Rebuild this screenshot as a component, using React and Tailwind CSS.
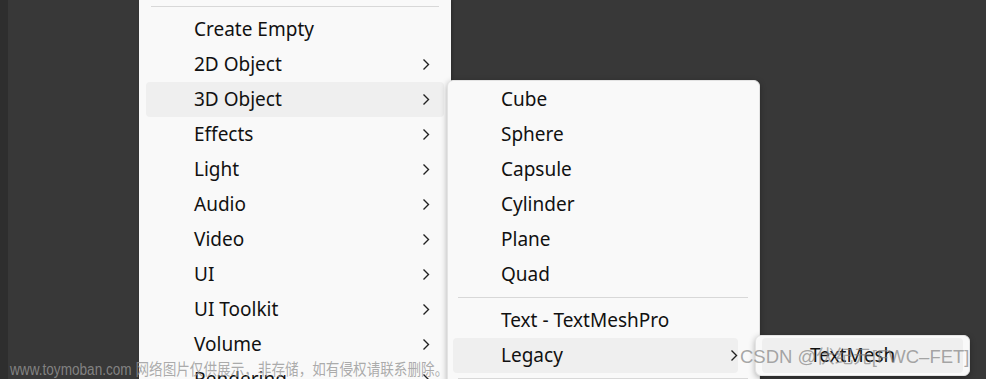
import React from "react";

const mainItems = [
  { label: "Create Empty" },
  { label: "2D Object", sub: true },
  { label: "3D Object", sub: true, active: true },
  { label: "Effects", sub: true },
  { label: "Light", sub: true },
  { label: "Audio", sub: true },
  { label: "Video", sub: true },
  { label: "UI", sub: true },
  { label: "UI Toolkit", sub: true },
  { label: "Volume", sub: true },
  { label: "Rendering", sub: true },
];

const Chevron = () => (
  <svg width="8" height="13" viewBox="0 0 8 13" fill="none" className="shrink-0">
    <path d="M1.5 1.5 L6.5 6.5 L1.5 11.5" stroke="#222" strokeWidth="1.4" />
  </svg>
);

const Row = ({ label, sub, active, className = "" }) => (
  <div
    className={`h-[35px] flex items-center rounded-[4px] pl-[48px] pr-[14px] ${
      active ? "bg-[#efefef]" : ""
    } ${className}`}
  >
    <span className="flex-1 text-[19px] text-[#111] leading-none">{label}</span>
    {sub && <Chevron />}
  </div>
);

const Sep = ({ className = "" }) => <div className={`h-px bg-[#d8d8d8] ${className}`} />;

export default function App() {
  return (
    <div
      className="relative w-[986px] h-[379px] overflow-hidden bg-[#383838]"
      style={{ fontFamily: '"Noto Sans", "Noto Sans CJK SC", sans-serif' }}
    >
      <div className="absolute left-0 top-0 w-[8px] h-full bg-[#2e2e2e]" />

      {/* main menu */}
      <div className="absolute left-[139px] top-0 w-[312px] h-[420px] bg-[#f9f9f9] shadow-[1px_0_3px_rgba(0,0,0,0.25)] px-[7px] pt-[6px]">
        <Sep className="mx-[5px]" />
        <div className="mt-[5px]">
          {mainItems.map((it) => (
            <Row key={it.label} {...it} />
          ))}
        </div>
      </div>

      {/* 3D object submenu */}
      <div className="absolute left-[447px] top-[80px] w-[313px] h-[320px] bg-[#f9f9f9] rounded-[6px] border border-[#e3e3e3] shadow-[0_2px_6px_rgba(0,0,0,0.3)] pl-[5px] pr-[6px] pt-[1px]">
        {["Cube", "Sphere", "Capsule", "Cylinder", "Plane", "Quad"].map((l) => (
          <Row key={l} label={l} />
        ))}
        <Sep className="mx-[5px] my-[5px]" />
        <Row label="Text - TextMeshPro" />
        <Row label="Legacy" sub active className="mr-[15px] !pr-[0px]" />
        <Sep className="mx-[5px] mt-[5px]" />
      </div>

      {/* legacy submenu */}
      <div className="absolute left-[755px] top-[335px] w-[215px] h-[41px] bg-[#f9f9f9] rounded-[6px] border border-[#e3e3e3] shadow-[0_2px_6px_rgba(0,0,0,0.3)] px-[6px] pt-[2px]">
        <div className="h-[35px] flex items-center rounded-[4px] bg-[#efefef] pl-[48px]">
          <span className="text-[19px] text-[#111] leading-none">TextMesh</span>
        </div>
      </div>

      {/* watermarks */}
      <div
        className="absolute left-[10px] top-[362px] text-[16px] leading-none text-[rgba(150,150,150,0.8)] whitespace-nowrap origin-left scale-x-[0.85]"
        style={{ fontFamily: '"Liberation Sans", "Noto Sans CJK SC", sans-serif' }}
      >
        www.toymoban.com 网络图片仅供展示，非存储，如有侵权请联系删除。
      </div>
      <div
        className="absolute left-[740px] top-[348px] text-[18.5px] leading-none text-[rgba(130,130,130,0.7)] whitespace-nowrap"
        style={{ fontFamily: '"Liberation Sans", "Noto Sans CJK SC", sans-serif' }}
      >
        CSDN @伏纪元[FWC–FET]
      </div>
    </div>
  );
}
